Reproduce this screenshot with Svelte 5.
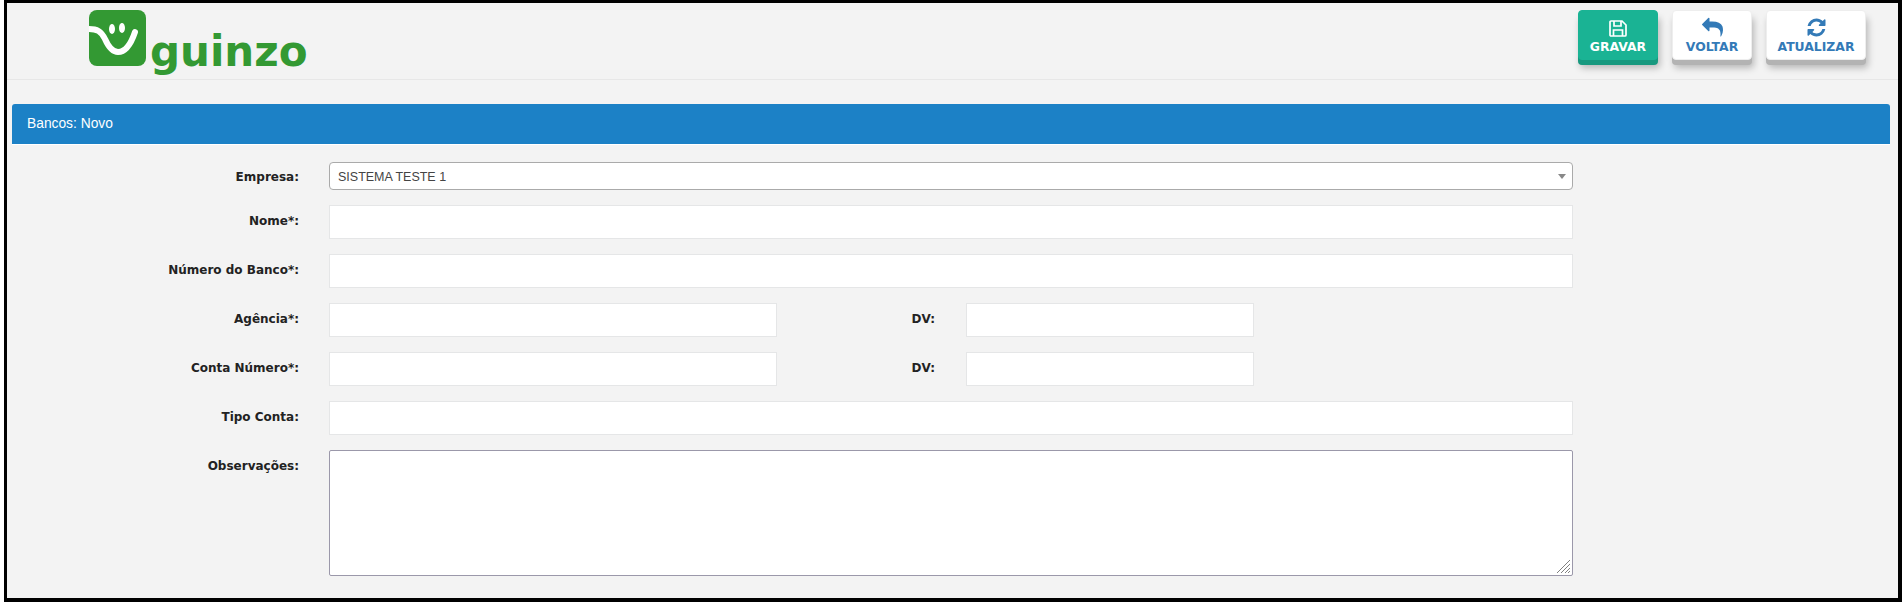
<script>
  let empresa = "1";
</script>

<div class="frame">
  <header class="topbar">
    <div class="logo">
      <svg class="logo-mark" width="57" height="56" viewBox="0 0 57 56">
        <rect width="57" height="56" rx="8" fill="#339933" />
        <path d="M0 19C8 19 12 21 16 29C20 38 24 42 29 42C36 42 42 34 46 22" fill="none" stroke="#fff" stroke-width="6" stroke-linecap="round" />
        <ellipse cx="23" cy="19" rx="3" ry="5" fill="#fff" />
        <ellipse cx="33" cy="18" rx="3" ry="5" fill="#fff" />
      </svg>
      <span class="logo-text">guinzo</span>
    </div>
    <div class="actions">
      <button class="btn primary" type="button">
        <svg width="18" height="17" viewBox="0 0 18 17" fill="none" stroke="currentColor" stroke-width="1.7">
          <path d="M2 1h11l4 4v10a1 1 0 0 1-1 1H2a1 1 0 0 1-1-1V2a1 1 0 0 1 1-1z" />
          <path d="M5 1v5h7V1M4.500 16v-6h9v6" />
        </svg>
        GRAVAR
      </button>
      <button class="btn" type="button">
        <svg width="21" height="21" viewBox="0 0 1792 1792" fill="currentColor">
          <path d="M1792 1120q0 166-127 451-3 7-10.500 24t-13.500 30-13 22q-12 17-28 17-15 0-23.500-10t-8.500-25q0-9 2.500-26.500t2.500-23.500q5-68 5-123 0-101-17.500-181t-48.500-138.500-80-101-105.500-69.500-133-42.500-154-21.500-175.500-6h-224v256q0 26-19 45t-45 19-45-19l-512-512q-19-19-19-45t19-45l512-512q19-19 45-19t45 19 19 45v256h224q713 0 875 403 53 134 53 333z" />
        </svg>
        VOLTAR
      </button>
      <button class="btn wide" type="button">
        <svg width="21" height="21" viewBox="0 0 1792 1792" fill="currentColor">
          <path d="M1639 1056q0 5-1 7-64 268-268 434.500t-478 166.500q-146 0-282.500-55t-243.500-157l-129 129q-19 19-45 19t-45-19-19-45v-448q0-26 19-45t45-19h448q26 0 45 19t19 45-19 45l-137 137q71 66 161 102t187 36q134 0 250-65t186-179q11-17 53-117 8-23 30-23h192q13 0 22.500 9.500t9.500 22.500zm25-800v448q0 26-19 45t-45 19h-448q-26 0-45-19t-19-45 19-45l138-138q-148-137-349-137-134 0-250 65t-186 179q-11 17-53 117-8 23-30 23h-199q-13 0-22.500-9.500t-9.500-22.500v-7q65-268 270-434.500t480-166.500q146 0 284 55.500t245 156.500l130-129q19-19 45-19t45 19 19 45z" />
        </svg>
        ATUALIZAR
      </button>
    </div>
  </header>

  <div class="panel-title">Bancos: Novo</div>

  <form class="form">
    <div class="row select-row">
      <label for="empresa">Empresa:</label>
      <div class="select-wrap">
        <select id="empresa" bind:value={empresa}>
          <option value="1">SISTEMA TESTE 1</option>
        </select>
        <span class="caret"></span>
      </div>
    </div>
    <div class="row">
      <label for="nome">Nome*:</label>
      <input id="nome" type="text" />
    </div>
    <div class="row">
      <label for="numero">Número do Banco*:</label>
      <input id="numero" type="text" />
    </div>
    <div class="row">
      <label for="agencia">Agência*:</label>
      <input id="agencia" class="half" type="text" />
      <label for="agencia-dv" class="dv-label">DV:</label>
      <input id="agencia-dv" class="dv" type="text" />
    </div>
    <div class="row">
      <label for="conta">Conta Número*:</label>
      <input id="conta" class="half" type="text" />
      <label for="conta-dv" class="dv-label">DV:</label>
      <input id="conta-dv" class="dv" type="text" />
    </div>
    <div class="row">
      <label for="tipo">Tipo Conta:</label>
      <input id="tipo" type="text" />
    </div>
    <div class="row">
      <label for="obs">Observações:</label>
      <div class="area-wrap">
        <textarea id="obs"></textarea>
        <svg class="grip" width="15" height="15" viewBox="0 0 15 15" stroke="#808080">
          <path d="M1 14L14 1M5 14L14 5M9 14L14 9M12 14L14 12" />
        </svg>
      </div>
    </div>
  </form>
</div>

<style>
  :global(body) {
    background: #fff;
  }

  .frame {
    box-sizing: border-box;
    width: 1898px;
    height: 602px;
    margin-left: 4px;
    border: solid #000;
    border-width: 3px 4px 4px 3px;
    background: #f3f3f3;
    overflow: hidden;
  }

  .topbar {
    display: flex;
    justify-content: space-between;
    box-sizing: border-box;
    height: 77px;
    padding: 7px 32px 0 82px;
    border-bottom: 1px solid #e7e7e7;
  }

  .logo {
    display: flex;
    align-items: flex-start;
    gap: 4px;
  }

  .logo-text {
    margin-top: 14px;
    font: bold 42px/56px "DejaVu Sans", sans-serif;
    color: #339933;
  }

  .actions {
    display: flex;
    gap: 14px;
  }

  .btn {
    display: flex;
    flex-direction: column;
    align-items: center;
    box-sizing: border-box;
    width: 80px;
    height: 50px;
    padding: 6px 0 0;
    border: 1px solid #eee;
    border-radius: 4px;
    background: #fff;
    box-shadow: 0 5px 0 #b3b3b3, 2px 8px 7px rgba(0, 0, 0, 0.25);
    color: #337ab7;
    font: bold 12.4px/14px "DejaVu Sans", sans-serif;
  }

  .btn svg {
    margin-bottom: 2px;
  }

  .btn.primary {
    border-color: #1ab394;
    background: #1ab394;
    box-shadow: 0 5px 0 #18997f, 2px 8px 7px rgba(0, 0, 0, 0.25);
    color: #fff;
  }

  .btn.primary svg {
    margin: 3px 0 3px;
  }

  .btn.wide {
    width: 100px;
  }

  .panel-title {
    box-sizing: border-box;
    height: 41px;
    margin: 24px 8px 0 5px;
    padding-left: 15px;
    border-bottom: 1px solid #fff;
    border-radius: 3px 3px 0 0;
    background: #1c81c6;
    color: #fff;
    font: 13.8px/39px "Liberation Sans", sans-serif;
  }

  .form {
    display: flex;
    flex-direction: column;
    gap: 15px;
    padding-top: 17px;
  }

  .row {
    display: flex;
    align-items: flex-start;
  }

  label {
    box-sizing: border-box;
    flex: none;
    width: 292px;
    margin-right: 30px;
    padding-top: 8px;
    text-align: right;
    color: #222;
    font: bold 12px/16px "DejaVu Sans", sans-serif;
  }

  .select-row label {
    padding-top: 7px;
  }

  .dv-label {
    width: 158px;
    margin-right: 31px;
  }

  input {
    box-sizing: border-box;
    width: 1244px;
    height: 34px;
    border: 1px solid #e5e6e7;
    background: #fff;
    outline: none;
  }

  input.half {
    width: 448px;
  }

  input.dv {
    width: 288px;
  }

  .select-wrap {
    position: relative;
    width: 1244px;
    height: 28px;
  }

  select {
    box-sizing: border-box;
    width: 100%;
    height: 28px;
    padding: 1px 8px 0;
    border: 1px solid #aaa;
    border-radius: 4px;
    background: #fff;
    appearance: none;
    color: #444;
    font: 12.5px "Liberation Sans", sans-serif;
  }

  .caret {
    position: absolute;
    top: 12px;
    right: 7px;
    border: solid transparent;
    border-width: 5px 4px 0;
    border-top-color: #888;
  }

  .area-wrap {
    position: relative;
    width: 1244px;
    height: 126px;
  }

  textarea {
    display: block;
    box-sizing: border-box;
    width: 100%;
    height: 100%;
    border: 1px solid #9b98aa;
    border-radius: 2px;
    background: #fff;
    resize: none;
  }

  .grip {
    position: absolute;
    right: 2px;
    bottom: 2px;
  }
</style>
